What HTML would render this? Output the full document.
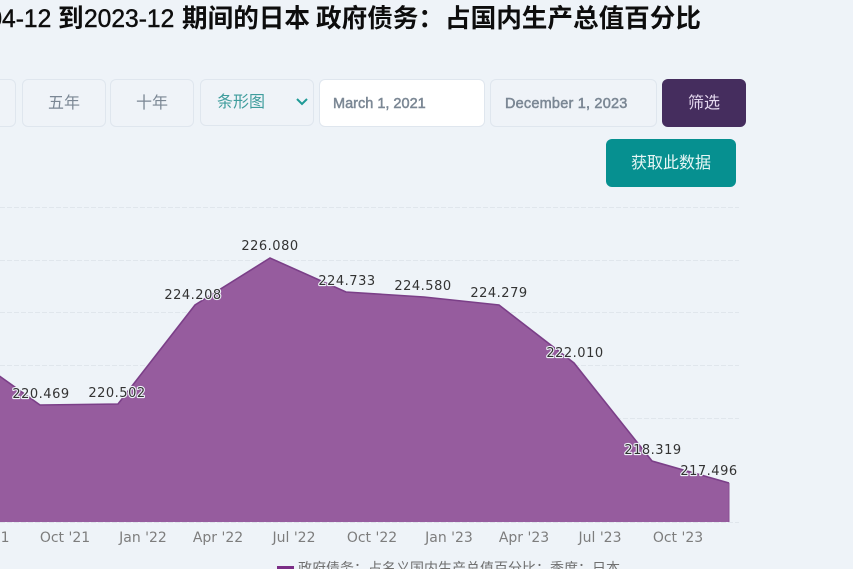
<!DOCTYPE html>
<html lang="zh"><head><meta charset="utf-8">
<style>
html,body{margin:0;padding:0;width:853px;height:569px;overflow:hidden;background:#eef3f8;}
body{position:relative;font-family:"Liberation Sans","Noto Sans CJK SC",sans-serif;}
.a{position:absolute;box-sizing:border-box;white-space:nowrap;}
.b{border:1px solid #dfe6ee;border-radius:6px;background:#eff3f8;text-align:center;height:48px;top:79px;line-height:48px;font-size:16px;color:#7b8794;}
.t{top:1px;height:37px;line-height:37px;font-size:25.6px;font-weight:700;color:#0d0d0d;}
.l{font-weight:400;font-size:24.6px;-webkit-text-stroke:.45px #0d0d0d;}
.d{text-align:left;padding-left:14px;font-size:14.5px;-webkit-text-stroke:.5px #7b8794;}
</style></head><body>
<div class="a t l" style="left:-39px;">2004-12</div>
<div class="a t" style="left:58px;">到</div>
<div class="a t l" style="left:84px;">2023-12</div>
<div class="a t" style="left:182px;">期间的日本</div>
<div class="a t" style="left:316px;">政府债务：</div>
<div class="a t" style="left:445px;">占国内生产总值百分比</div>
<div class="a b" style="left:-40px;width:56px;"></div>
<div class="a b" style="left:22px;width:84px;">五年</div>
<div class="a b" style="left:110px;width:84px;">十年</div>
<div class="a b" style="left:200px;width:114px;height:47px;line-height:45px;text-align:left;padding-left:16px;color:#3f9d9d;">条形图
<svg style="position:absolute;left:94px;top:17px" width="14" height="10" viewBox="0 0 14 10"><path d="M2 2l5 5 5-5" fill="none" stroke="#1f9a96" stroke-width="2"/></svg></div>
<div class="a b d" style="left:319px;width:166px;background:#fff;padding-left:13px;">March 1, 2021</div>
<div class="a b d" style="left:490px;width:167px;letter-spacing:.2px;">December 1, 2023</div>
<div class="a" style="left:662px;top:79px;width:84px;height:48px;background:#452d5e;border-radius:6px;text-align:center;line-height:50px;font-size:16px;color:#e4d8ee;">筛选</div>
<div class="a" style="left:606px;top:139px;width:130px;height:48px;background:#069090;border-radius:6px;text-align:center;line-height:50px;font-size:16px;color:#e6f6f5;">获取此数据</div>
<svg class="a" style="left:0;top:0" width="853" height="569" viewBox="0 0 853 569">
<g stroke="#e0e6ec" stroke-width="1" stroke-dasharray="5 2" fill="none">
<path d="M0 207.5H739M0 260.5H739M0 312.5H739M0 365.5H739M0 418.5H739M0 522.5H739"/>
</g>
<path d="M-2 375L40 405L118 404L195 305L270 258L346 292L424 297L499 305L574 363L652 461L729 483V522H-2Z" fill="#965c9e"/>
<path d="M-2 375L40 405L118 404L195 305L270 258L346 292L424 297L499 305L574 363L652 461L729 483" fill="none" stroke="#7b3f88" stroke-width="1.6"/>
<path d="M729 483V522" stroke="#8a4e94" stroke-width="1"/>
<g font-family="'DejaVu Sans',sans-serif" font-size="13" fill="#333" text-anchor="middle" letter-spacing=".5" stroke="#eef3f8" stroke-width="2.2" paint-order="stroke" stroke-linejoin="round">
<text x="41" y="398">220.469</text>
<text x="117" y="397">220.502</text>
<text x="193" y="299">224.208</text>
<text x="270" y="250">226.080</text>
<text x="347" y="285">224.733</text>
<text x="423" y="290">224.580</text>
<text x="499" y="297">224.279</text>
<text x="575" y="357">222.010</text>
<text x="653" y="454">218.319</text>
<text x="709" y="475">217.496</text>
</g>
<g font-family="'DejaVu Sans',sans-serif" font-size="14" fill="#7d7d7d" text-anchor="middle">
<text x="-12" y="542">Jul '21</text>
<text x="65" y="542">Oct '21</text>
<text x="143" y="542">Jan '22</text>
<text x="218" y="542">Apr '22</text>
<text x="294" y="542">Jul '22</text>
<text x="372" y="542">Oct '22</text>
<text x="449" y="542">Jan '23</text>
<text x="524" y="542">Apr '23</text>
<text x="600" y="542">Jul '23</text>
<text x="678" y="542">Oct '23</text>
</g>
<rect x="277" y="566" width="17" height="6" fill="#7b2d86"/>
<text x="298" y="573" font-family="'Liberation Sans','Noto Sans CJK SC',sans-serif" font-size="14" fill="#6f6f6f">政府债务：占名义国内生产总值百分比：季度：日本</text>
</svg>
</body></html>
